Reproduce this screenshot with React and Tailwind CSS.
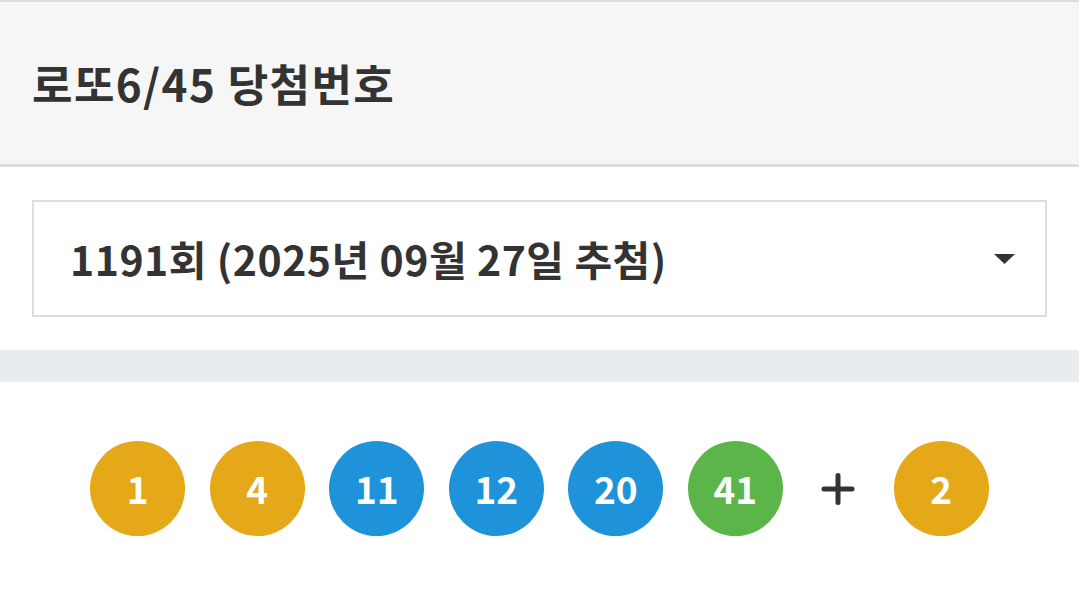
import React from 'react';

const font = { fontFamily: '"Noto Sans CJK KR", "Noto Sans", sans-serif' };

const balls = [
    { n: 1, color: 'bg-[#e4a818]' },
    { n: 4, color: 'bg-[#e4a818]' },
    { n: 11, color: 'bg-[#1e93da]' },
    { n: 12, color: 'bg-[#1e93da]' },
    { n: 20, color: 'bg-[#1e93da]' },
    { n: 41, color: 'bg-[#5cb548]' },
];

const Ball = ({ n, color }) => (
    <div className={`w-[95px] h-[95px] rounded-full ${color} flex items-center justify-center text-white text-[37px] font-bold`}>
        {n}
    </div>
);

export default function App() {
    return (
        <div className="w-[1079px] h-[591px] bg-white overflow-hidden text-[#333]" style={font}>
            {/* Header */}
            <div className="h-[167px] bg-[#f6f6f6] border-t-2 border-b-[3px] border-[#dddddd] flex items-center px-[32px]">
                <h1 className="text-[44px] font-bold tracking-[1.4px]">로또6/45 당첨번호</h1>
            </div>

            {/* Draw select */}
            <div className="px-[32px] py-[33px]">
                <div className="h-[117px] border-2 border-[#dddddd] flex items-center justify-between pl-[36px] pr-[30px]">
                    <span className="text-[41px] font-bold tracking-[0.5px]">1191회 (2025년 09월 27일 추첨)</span>
                    <svg width="21" height="10" viewBox="0 0 21 10">
                        <path d="M0 0 L21 0 L10.5 10 Z" fill="#333" />
                    </svg>
                </div>
            </div>

            <div className="h-[32px] bg-[#e8ecee]"></div>

            {/* Numbers */}
            <div className="flex items-center justify-center gap-[24.5px] pt-[59px]">
                {balls.map((b) => (
                    <Ball key={b.n} {...b} />
                ))}
                <div className="w-[62px] flex items-center justify-center">
                    <svg width="34" height="32" viewBox="0 0 34 32">
                        <path d="M17 2.5 V29.5 M3 16 H31" stroke="#333" strokeWidth="5" strokeLinecap="round" />
                    </svg>
                </div>
                <Ball n={2} color="bg-[#e4a818]" />
            </div>
        </div>
    );
}
